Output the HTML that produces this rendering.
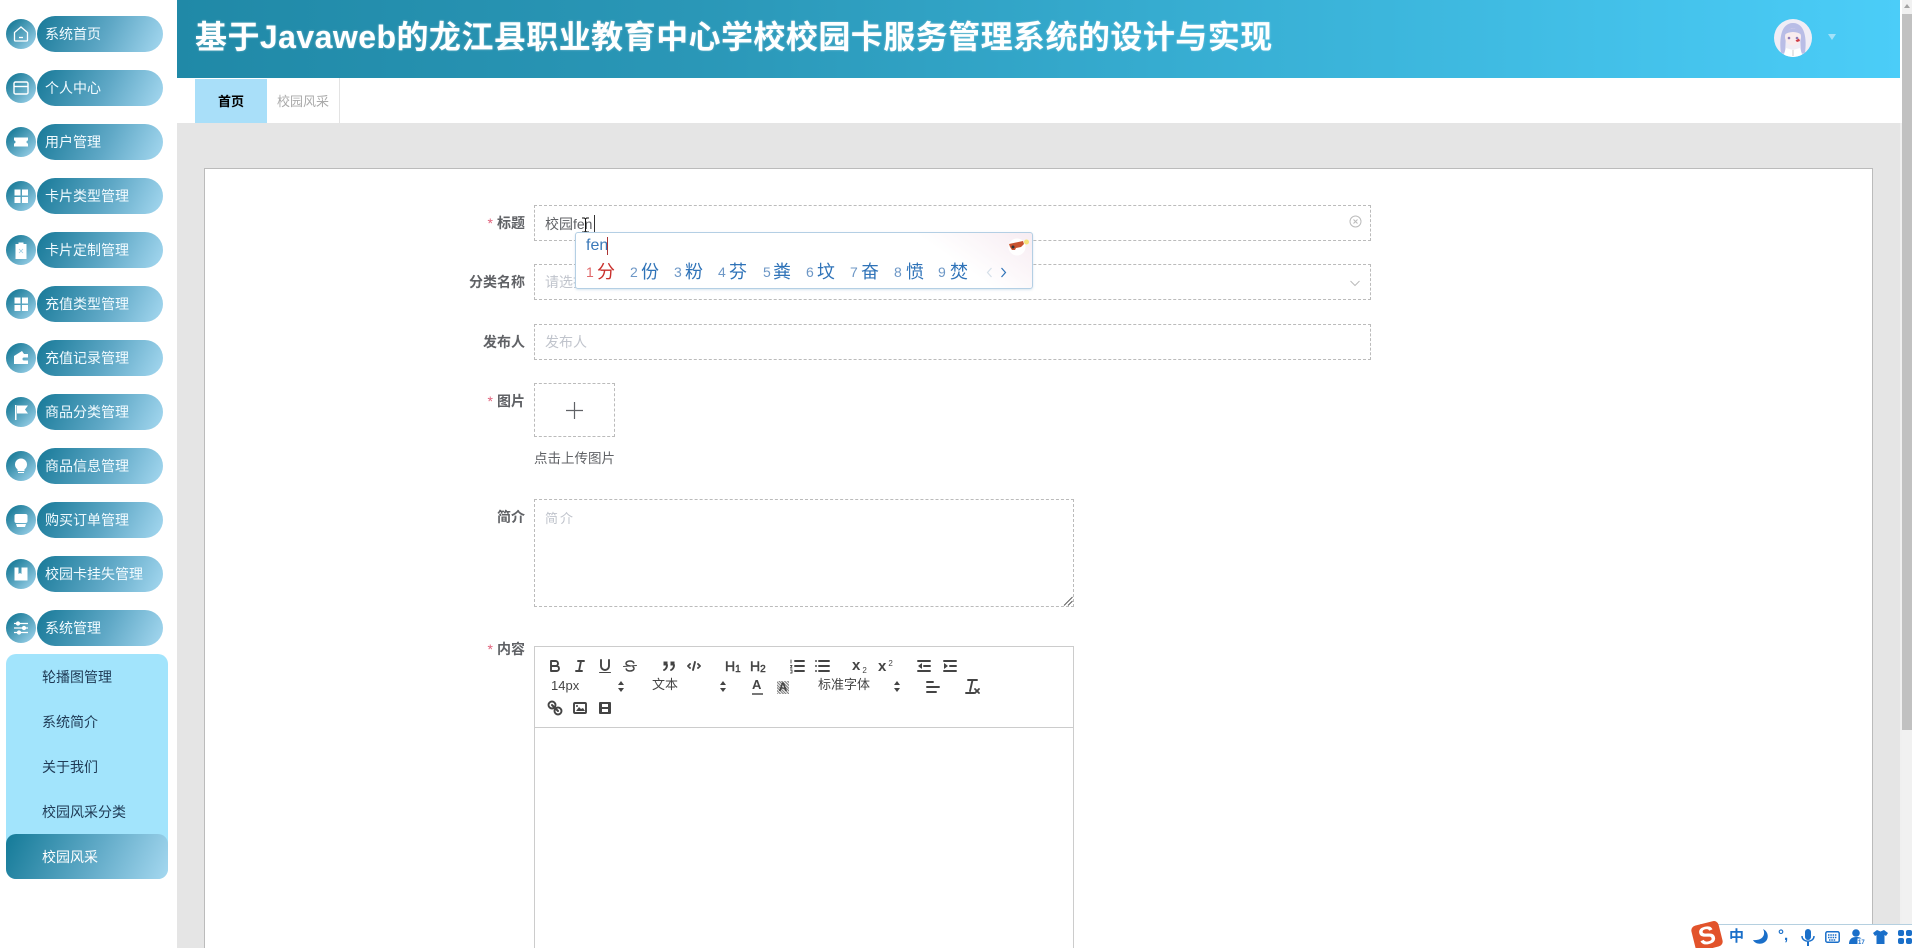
<!DOCTYPE html>
<html lang="zh-CN"><head><meta charset="utf-8"><title>校园风采</title>
<style>
*{box-sizing:border-box}
html,body{margin:0;padding:0;width:1912px;height:948px;overflow:hidden;background:#fff;font-family:"Liberation Sans","Noto Sans CJK SC",sans-serif}
#w{position:relative;width:1912px;height:948px;overflow:hidden;background:#fff}
.a{position:absolute}
.t{position:absolute;white-space:nowrap;line-height:20px}
.c{position:absolute;left:6px;width:30px;height:30px;border-radius:50%;background:linear-gradient(135deg,#24829f 20%,#a5d8f0 100%);display:flex;align-items:center;justify-content:center}
.p{position:absolute;left:37px;width:126px;height:36px;border-radius:18px;background:linear-gradient(115deg,#1d7d9c 5%,#5fa8c6 55%,#a5d8f0 100%);color:#f2fbff;font-size:14px;line-height:36px;padding-left:8px;white-space:nowrap}
.sub{color:#1f3a55;font-size:14px;left:42px}
.in{position:absolute;left:534px;width:837px;height:36px;border:1px dashed #bbb;background:#fff}
.lb{position:absolute;right:1387px;font-size:14px;font-weight:700;color:#606266;line-height:20px;white-space:nowrap}
.lb i{color:#e0607a;font-style:normal;font-weight:400;margin-right:4px}
.ph{color:#c0c4cc;font-size:14px}
.q{position:absolute;width:18px;height:18px;fill:none;stroke:#444;stroke-width:1.9;stroke-linecap:round;stroke-linejoin:round}
.q .f{fill:#444;stroke:none}
.ud{position:absolute;width:6px;height:11px}
.n{position:absolute;font-size:14px;top:263px;line-height:18px;color:#6d97c6}
.h{position:absolute;font-size:18px;top:261px;line-height:22px;color:#2f73b8}
</style></head><body><div id="w">

<!-- sidebar -->
<div class="c" style="top:19px"><svg width="18" height="18" viewBox="0 0 18 18" fill="none" stroke="#fff" stroke-width="1.3"><path d="M2.500 7.500 9 2l6.500 5.500V15a1 1 0 0 1-1 1h-11a1 1 0 0 1-1-1z"/><path d="M7 12.500h4"/></svg></div>
<div class="p" style="top:16px">系统首页</div>
<div class="c" style="top:73px"><svg width="18" height="18" viewBox="0 0 18 18" fill="none" stroke="#fff" stroke-width="1.400"><rect x="2" y="3" width="14" height="12" rx="1.500"/><path d="M2 7.500h14"/></svg></div>
<div class="p" style="top:70px">个人中心</div>
<div class="c" style="top:127px"><svg width="18" height="18" viewBox="0 0 18 18" fill="#fff"><path d="M2 4.500h14v3a1.500 1.500 0 0 0 0 3v3H2v-3a1.500 1.500 0 0 0 0-3z"/></svg></div>
<div class="p" style="top:124px">用户管理</div>
<div class="c" style="top:181px"><svg width="18" height="18" viewBox="0 0 18 18" fill="#fff"><rect x="2.500" y="2.500" width="6" height="6"/><rect x="10" y="2.500" width="6" height="6"/><rect x="2.500" y="10" width="6" height="6"/><rect x="10" y="10" width="6" height="6"/></svg></div>
<div class="p" style="top:178px">卡片类型管理</div>
<div class="c" style="top:235px"><svg width="18" height="18" viewBox="0 0 18 18" fill="#fff"><path d="M3.500 3H6.500V1.500h5V3h3v15h-11z"/><path d="M7 8l4 4M11 8l-4 4" stroke="#9ccbe0" stroke-width=".8"/></svg></div>
<div class="p" style="top:232px">卡片定制管理</div>
<div class="c" style="top:289px"><svg width="18" height="18" viewBox="0 0 18 18" fill="#fff"><rect x="2.500" y="2.500" width="6" height="6"/><rect x="10" y="2.500" width="6" height="6"/><rect x="2.500" y="10" width="6" height="6"/><rect x="10" y="10" width="6" height="6"/></svg></div>
<div class="p" style="top:286px">充值类型管理</div>
<div class="c" style="top:343px"><svg width="18" height="18" viewBox="0 0 18 18" fill="#fff"><path d="M2 7l8-5 2 3h4v3.500h-4a1.500 1.500 0 0 0 0 3h4V15H2z"/></svg></div>
<div class="p" style="top:340px">充值记录管理</div>
<div class="c" style="top:397px"><svg width="18" height="18" viewBox="0 0 18 18" fill="#fff"><path d="M3 2h1.500v15H3zM5 2.500h11l-3 4 3 4H5z"/></svg></div>
<div class="p" style="top:394px">商品分类管理</div>
<div class="c" style="top:451px"><svg width="18" height="18" viewBox="0 0 18 18" fill="#fff"><path d="M9 1.500a6 6 0 0 1 3.500 10.900V14h-7v-1.600A6 6 0 0 1 9 1.500zM6 15h6v1H6z"/></svg></div>
<div class="p" style="top:448px">商品信息管理</div>
<div class="c" style="top:505px"><svg width="18" height="18" viewBox="0 0 18 18" fill="#fff"><rect x="2.500" y="3" width="13" height="9" rx="2"/><path d="M4 13h10l-1 3H5z"/></svg></div>
<div class="p" style="top:502px">购买订单管理</div>
<div class="c" style="top:559px"><svg width="18" height="18" viewBox="0 0 18 18" fill="#fff"><path d="M2.500 2.500h4V9l1.500-1 1.500 1V2.500h6v13h-13z"/></svg></div>
<div class="p" style="top:556px">校园卡挂失管理</div>
<div class="c" style="top:613px"><svg width="18" height="18" viewBox="0 0 18 18" fill="none" stroke="#fff" stroke-width="1.300"><path d="M2 4.500h14M2 9h14M2 13.500h14"/><circle cx="6" cy="4.500" r="1.500" fill="#fff"/><circle cx="12" cy="9" r="1.500" fill="#fff"/><circle cx="7" cy="13.500" r="1.500" fill="#fff"/></svg></div>
<div class="p" style="top:610px">系统管理</div>

<div class="a" style="left:6px;top:654px;width:162px;height:225px;background:#a2e4fc;border-radius:10px"></div>
<div class="a" style="left:6px;top:834px;width:162px;height:45px;border-radius:10px;background:linear-gradient(115deg,#147a98 0%,#62abc8 55%,#a5d8f0 100%)"></div>
<div class="t sub" style="top:667px">轮播图管理</div>
<div class="t sub" style="top:712px">系统简介</div>
<div class="t sub" style="top:757px">关于我们</div>
<div class="t sub" style="top:802px">校园风采分类</div>
<div class="t sub" style="top:847px;color:#fff">校园风采</div>

<!-- header -->
<div class="a" style="left:177px;top:0;width:1723px;height:78px;background:linear-gradient(90deg,#2089a7 0%,#2a97b7 30%,#3cb6dc 70%,#4bcdf8 100%)"></div>
<div class="t" style="left:195px;top:14px;font-size:32px;line-height:46px;font-weight:700;letter-spacing:.45px;color:#fff;text-shadow:0 0 2px rgba(255,255,255,.4)">基于Javaweb的龙江县职业教育中心学校校园卡服务管理系统的设计与实现</div>
<svg class="a" style="left:1774px;top:19px" width="38" height="38" viewBox="0 0 38 38">
<defs><clipPath id="av"><circle cx="19" cy="19" r="19"/></clipPath></defs>
<g clip-path="url(#av)"><rect width="38" height="38" fill="#f0edf6"/>
<path d="M7 34C5 20 7 4 19 4s14 16 12 30l-4 1-1-20H12l-1 20z" fill="#b9bde6"/>
<ellipse cx="19" cy="18" rx="8" ry="8.500" fill="#f9ecee"/>
<path d="M10 16c2-8 16-9 18 0-5-4-13-4-18 0z" fill="#b9bde6"/>
<circle cx="15" cy="19" r="1.300" fill="#8f7ab5"/><circle cx="23" cy="19" r="1.300" fill="#8f7ab5"/><path d="M21.500 21.500l3.500-2 1 2.500-3 1z" fill="#cf3a44"/>
<path d="M9 38l3-9 7 2 7-2 3 9z" fill="#fff"/><path d="M19 31v6" stroke="#aaa" stroke-width=".6"/></g></svg>
<div class="a" style="left:1828px;top:34px;width:0;height:0;border-left:4.500px solid transparent;border-right:4.500px solid transparent;border-top:6px solid #a3e2f9"></div>

<!-- tabs -->
<div class="a" style="left:177px;top:78px;width:1723px;height:45px;background:#fff"></div>
<div class="a" style="left:195px;top:79px;width:72px;height:44px;background:#a9dff9;text-align:center;font-size:13px;font-weight:700;color:#000;line-height:46px">首页</div>
<div class="a" style="left:267px;top:78px;width:73px;height:45px;border-right:1px solid #e3e3e3;text-align:center;font-size:13px;color:#aaa;line-height:48px">校园风采</div>

<!-- content -->
<div class="a" style="left:177px;top:123px;width:1723px;height:825px;background:#e5e5e5"></div>
<div class="a" style="left:1900px;top:123px;width:2px;height:825px;background:#f0f0f0"></div>
<div class="a" style="left:204px;top:168px;width:1669px;height:800px;background:#fff;border:1px solid #bbb"></div>

<!-- form -->
<div class="lb" style="top:213px"><i>*</i>标题</div>
<div class="in" style="top:205px"></div>
<div class="t" style="left:545px;top:214px;font-size:14px;color:#606266">校园fen</div>
<div class="a" style="left:594px;top:215px;width:1px;height:17px;background:#333"></div>
<svg class="a" style="left:581px;top:217px" width="9" height="16" viewBox="0 0 9 16" fill="none" stroke="#111" stroke-width="1"><path d="M1 1h2.500L4.500 2l1-1H8M4.500 2v12M1 15h2.500l1-1 1 1H8"/></svg>
<svg class="a" style="left:1349px;top:215px" width="13" height="13" viewBox="0 0 13 13" fill="none" stroke="#bbb" stroke-width="1"><circle cx="6.500" cy="6.500" r="5.500"/><path d="M4.500 4.500l4 4M8.500 4.500l-4 4"/></svg>

<div class="lb" style="top:272px">分类名称</div>
<div class="in" style="top:264px"></div>
<div class="t ph" style="left:545px;top:272px">请选择分类名称</div>
<svg class="a" style="left:1349px;top:278px" width="12" height="10" viewBox="0 0 12 10" fill="none" stroke="#bbb" stroke-width="1"><path d="M1.500 3l4.500 4.500L10.500 3"/></svg>

<div class="lb" style="top:332px">发布人</div>
<div class="in" style="top:324px"></div>
<div class="t ph" style="left:545px;top:332px">发布人</div>

<div class="lb" style="top:391px"><i>*</i>图片</div>
<div class="a" style="left:534px;top:383px;width:81px;height:54px;border:1px dashed #bbb"></div>
<svg class="a" style="left:565px;top:401px" width="19" height="19" viewBox="0 0 19 19" stroke="#606266" stroke-width="1.200"><path d="M9.500 1v17M1 9.500h17"/></svg>
<div class="t" style="left:534px;top:449px;font-size:13.500px;color:#606266">点击上传图片</div>

<div class="lb" style="top:507px">简介</div>
<div class="a" style="left:534px;top:499px;width:540px;height:108px;border:1px dashed #bbb"></div>
<div class="t ph" style="left:545px;top:509px;font-size:13px;letter-spacing:2px">简介</div>
<svg class="a" style="left:1063px;top:596px" width="10" height="10" viewBox="0 0 10 10" stroke="#555" stroke-width=".9"><path d="M1 9.500L9.500 1M5 9.500L9.500 5"/></svg>

<div class="lb" style="top:639px"><i>*</i>内容</div>
<div class="a" style="left:534px;top:646px;width:540px;height:320px;border:1px solid #ccc"></div>
<div class="a" style="left:534px;top:727px;width:540px;height:1px;background:#ccc"></div>

<!-- toolbar row 1 -->
<svg class="q" style="left:546px;top:657px" viewBox="0 0 18 18"><path d="M5 4h4.500a2.500 2.500 0 0 1 0 5H5zM5 9h5.500a2.500 2.500 0 0 1 0 5H5z"/></svg>
<svg class="q" style="left:571px;top:657px" viewBox="0 0 18 18"><path d="M7 4h6M5 14h6M8 14l2-10"/></svg>
<svg class="q" style="left:596px;top:657px" viewBox="0 0 18 18"><path d="M5 3v6a4 4 0 0 0 8 0V3"/><rect class="f" x="3" y="15" width="12" height="1" rx=".5"/></svg>
<svg class="q" style="left:621px;top:657px" viewBox="0 0 18 18"><path d="M15.500 8.500L2.500 9.500" stroke-width="1"/><path d="M12.800 6C12.300 4.500 10.800 4 9 4 6.800 4 5 5 5 6.500c0 1.500 1.500 2 4 2.500M5.200 12C5.700 13.500 7.200 14 9 14c2.200 0 4-1 4-2.500 0-.8-.3-1.400-1-1.800" stroke-width="1.500"/></svg>
<svg class="q" style="left:660px;top:657px" viewBox="0 0 18 18"><rect class="f" x="3.500" y="4.500" width="4" height="4"/><rect class="f" x="10.500" y="4.500" width="4" height="4"/><path d="M7 8c0 4-3 5-3 5M14 8c0 4-3 5-3 5"/></svg>
<svg class="q" style="left:685px;top:657px" viewBox="0 0 18 18"><path d="M5 7L3 9l2 2M13 7l2 2-2 2M10 5l-2 8"/></svg>
<div class="t" style="left:725px;top:656px;font-size:14px;color:#444;-webkit-text-stroke:.5px #444">H<span style="font-size:10px;vertical-align:-1px">1</span></div>
<div class="t" style="left:750px;top:656px;font-size:14px;color:#444;-webkit-text-stroke:.5px #444">H<span style="font-size:10px;vertical-align:-1px">2</span></div>
<svg class="q" style="left:788px;top:657px" viewBox="0 0 18 18"><path d="M7 4h9M7 9h9M7 14h9"/><path d="M3 3v3M2.500 8.500h1.500L2.500 11H4M2.500 13h1.500v3H2.500" stroke-width=".9"/></svg>
<svg class="q" style="left:813px;top:657px" viewBox="0 0 18 18"><path d="M6 4h10M6 9h10M6 14h10M3 4h.01M3 9h.01M3 14h.01"/></svg>
<div class="t" style="left:852px;top:656px;font-size:15px;font-weight:700;color:#444">x<span style="font-size:8px;font-weight:400;vertical-align:-3px;margin-left:2px">2</span></div>
<div class="t" style="left:878px;top:654px;font-size:15px;font-weight:700;color:#444">x<span style="font-size:8px;font-weight:400;vertical-align:5px;margin-left:2px">2</span></div>
<svg class="q" style="left:915px;top:657px" viewBox="0 0 18 18"><path d="M3 4h12M9 9h6M3 14h12"/><path class="f" d="M7 6v6L3 9z"/></svg>
<svg class="q" style="left:941px;top:657px" viewBox="0 0 18 18"><path d="M3 4h12M9 9h6M3 14h12"/><path class="f" d="M3 6v6l4-3z"/></svg>

<!-- toolbar row 2 -->
<div class="t" style="left:551px;top:676px;font-size:13px;color:#444">14px</div>
<svg class="ud" style="left:618px;top:681px" viewBox="0 0 6 11" fill="#444"><path d="M3 0l3 4H0zM3 11l3-4H0z"/></svg>
<div class="t" style="left:652px;top:675px;font-size:13px;color:#444">文本</div>
<svg class="ud" style="left:720px;top:681px" viewBox="0 0 6 11" fill="#444"><path d="M3 0l3 4H0zM3 11l3-4H0z"/></svg>
<div class="t" style="left:752px;top:675px;font-size:13px;font-weight:700;color:#444">A</div>
<div class="a" style="left:752px;top:693px;width:11px;height:2px;background:#777"></div>
<div class="a" style="left:777px;top:681px;width:12px;height:13px;background:repeating-linear-gradient(45deg,#888 0 1px,#eee 1px 2px);font-size:12px;font-weight:700;color:#444;line-height:13px;text-align:center">A</div>
<div class="t" style="left:818px;top:675px;font-size:13px;color:#444">标准字体</div>
<svg class="ud" style="left:894px;top:681px" viewBox="0 0 6 11" fill="#444"><path d="M3 0l3 4H0zM3 11l3-4H0z"/></svg>
<svg class="q" style="left:924px;top:678px" viewBox="0 0 18 18"><path d="M3 4h6M3 9h12M3 14h9"/></svg>
<svg class="q" style="left:963px;top:677px" viewBox="0 0 18 18"><path d="M5 3h9M9.500 3L7 14M3 16h8"/><path d="M12 12l4 4M16 12l-4 4" stroke-width="1.800"/></svg>

<!-- toolbar row 3 -->
<svg class="q" style="left:546px;top:699px" viewBox="0 0 18 18"><circle cx="6" cy="6" r="3.500"/><circle cx="12" cy="12" r="3.500"/><path d="M6 6l6 6" stroke-width="2"/></svg>
<svg class="q" style="left:571px;top:699px" viewBox="0 0 18 18"><rect x="3" y="4" width="12" height="10" rx="1"/><path class="f" d="M5 12l3-4 2 2 2-1 2 3z"/><circle class="f" cx="6" cy="7" r="1"/></svg>
<svg class="q" style="left:596px;top:699px" viewBox="0 0 18 18"><rect class="f" x="3" y="3" width="12" height="12" rx="1"/><rect x="6" y="5" width="6" height="3" fill="#fff" stroke="none"/><rect x="6" y="10" width="6" height="3" fill="#fff" stroke="none"/></svg>

<!-- IME -->
<div class="a" style="left:575px;top:232px;width:458px;height:57px;background:linear-gradient(215deg,#f7ecf2 0,#fff 22%);border:1px solid #b4cfe4;border-radius:3px;box-shadow:0 1px 2px rgba(100,150,190,.25)"></div>
<div class="t" style="left:586px;top:236px;font-size:16px;color:#3a78b8">fen</div>
<div class="a" style="left:607px;top:237px;width:1px;height:18px;background:#a33"></div>
<div class="n" style="left:586px;color:#e0686a">1</div><div class="h" style="left:597px;color:#c9302c">分</div>
<div class="n" style="left:630px">2</div><div class="h" style="left:641px">份</div>
<div class="n" style="left:674px">3</div><div class="h" style="left:685px">粉</div>
<div class="n" style="left:718px">4</div><div class="h" style="left:729px">芬</div>
<div class="n" style="left:763px">5</div><div class="h" style="left:773px">粪</div>
<div class="n" style="left:806px">6</div><div class="h" style="left:817px">坟</div>
<div class="n" style="left:850px">7</div><div class="h" style="left:861px">奋</div>
<div class="n" style="left:894px">8</div><div class="h" style="left:906px">愤</div>
<div class="n" style="left:938px">9</div><div class="h" style="left:950px">焚</div>
<svg class="a" style="left:986px;top:267px" width="7" height="11" viewBox="0 0 7 11" fill="none" stroke="#d5dfe8" stroke-width="1.200"><path d="M5.500 1L1.500 5.500l4 4.500"/></svg>
<svg class="a" style="left:1000px;top:267px" width="7" height="11" viewBox="0 0 7 11" fill="none" stroke="#2f73b8" stroke-width="1.200"><path d="M1.500 1l4 4.500-4 4.500"/></svg>
<svg class="a" style="left:1006px;top:235px" width="24" height="22" viewBox="0 0 24 22"><circle cx="11" cy="12" r="8.500" fill="#fff"/><path d="M3 9l14-3 1 3-3 3-5 1-1 2-3 0-2-3z" fill="#c9532f"/><circle cx="7" cy="12" r="1.500" fill="#333"/><circle cx="20.500" cy="7" r="2.500" fill="#f6e27a"/></svg>

<!-- scrollbar -->
<div class="a" style="left:1900px;top:0;width:2px;height:123px;background:#fff"></div>
<div class="a" style="left:1902px;top:0;width:10px;height:948px;background:#f1f1f1"></div>
<div class="a" style="left:1902px;top:14px;width:10px;height:716px;background:#c1c1c1"></div>
<div class="a" style="left:1904px;top:4px;width:0;height:0;border-left:3.500px solid transparent;border-right:3.500px solid transparent;border-bottom:4px solid #a3a3a3"></div>

<!-- Sogou bar -->
<div class="a" style="left:1700px;top:924px;width:212px;height:24px;background:#fff;border-top:1px solid #b5d0e0"></div>
<div class="a" style="left:1693px;top:923px;width:28px;height:26px;background:#e2532b;border-radius:5px;transform:rotate(-14deg);color:#fff;font-size:25px;font-weight:700;text-align:center;line-height:26px">S</div>
<div class="t" style="left:1729px;top:927px;font-size:15px;font-weight:700;color:#1a6fc9">中</div>
<svg class="a" style="left:1752px;top:929px" width="18" height="16" viewBox="0 0 18 16" fill="#1a6fc9"><path d="M11 0c3 5 0 12-10 11 2 4 8 5 12 2s4-10-2-13z"/></svg>
<div class="t" style="left:1778px;top:926px;font-size:15px;font-weight:700;color:#1a6fc9">°,</div>
<svg class="a" style="left:1801px;top:929px" width="14" height="17" viewBox="0 0 14 17" fill="#1a6fc9"><rect x="4" y="0" width="6" height="11" rx="3"/><path d="M1 7c0 7 12 7 12 0" fill="none" stroke="#1a6fc9" stroke-width="1.500"/><rect x="6" y="13" width="2" height="4"/></svg>
<svg class="a" style="left:1825px;top:931px" width="15" height="12" viewBox="0 0 15 12" fill="none" stroke="#1a6fc9" stroke-width="1.500"><rect x=".8" y=".8" width="13.400" height="10.400" rx="1.500"/><path d="M3 4h9M3 6.500h9M4 9h7" stroke-dasharray="1.500 .8"/></svg>
<svg class="a" style="left:1849px;top:929px" width="16" height="16" viewBox="0 0 16 16" fill="#1a6fc9"><circle cx="7" cy="4" r="3.800"/><path d="M0 15c0-5 3-7 7-7s5 1 6 2v5z"/><rect x="8.500" y="9.500" width="7" height="6" fill="#fff"/><text x="9" y="15" font-size="6" font-weight="700" fill="#1a6fc9" font-family="Liberation Sans">17</text></svg>
<svg class="a" style="left:1873px;top:930px" width="15" height="14" viewBox="0 0 15 14" fill="#1a6fc9"><path d="M4 0l3.500 1.500L11 0l4 3-2 3-1.500-1v9h-8V5L2 6 0 3z"/></svg>
<svg class="a" style="left:1898px;top:930px" width="14" height="14" viewBox="0 0 14 14" fill="#1a6fc9"><rect width="6" height="6" rx="2"/><rect x="8" width="6" height="6" rx="2"/><rect y="8" width="6" height="6" rx="2"/><rect x="8" y="8" width="6" height="6" rx="2"/></svg>

</div></body></html>
